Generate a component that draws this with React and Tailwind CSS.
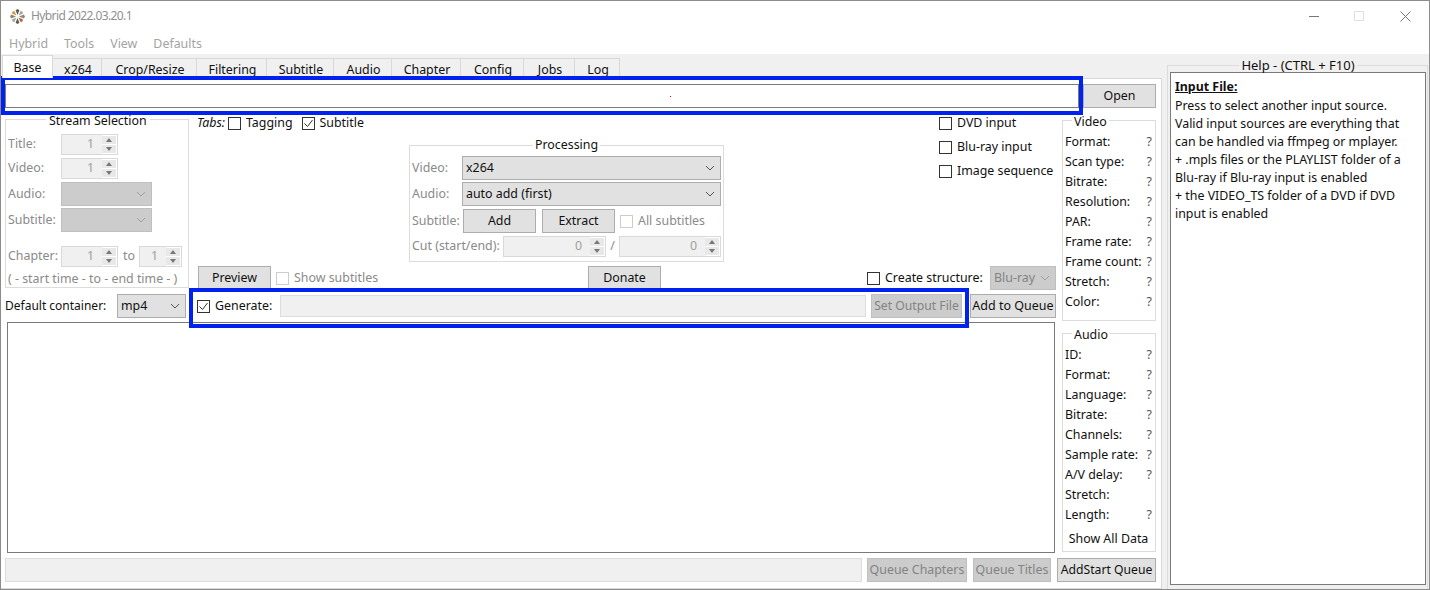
const tabs = [
  ['Base', 'w-[51px]'],
  ['x264', 'w-[49px]'],
  ['Crop/Resize', 'w-[95px]'],
  ['Filtering', 'w-[70px]'],
  ['Subtitle', 'w-[67px]'],
  ['Audio', 'w-[58px]'],
  ['Chapter', 'w-[69px]'],
  ['Config', 'w-[63px]'],
  ['Jobs', 'w-[51px]'],
  ['Log', 'w-[45px]'],
];

const videoInfo = [
  ['Format:', '?'],
  ['Scan type:', '?'],
  ['Bitrate:', '?'],
  ['Resolution:', '?'],
  ['PAR:', '?'],
  ['Frame rate:', '?'],
  ['Frame count:', '?'],
  ['Stretch:', '?'],
  ['Color:', '?'],
];

const audioInfo = [
  ['ID:', '?'],
  ['Format:', '?'],
  ['Language:', '?'],
  ['Bitrate:', '?'],
  ['Channels:', '?'],
  ['Sample rate:', '?'],
  ['A/V delay:', '?'],
  ['Stretch:', ''],
  ['Length:', '?'],
];

const helpLines = [
  'Press to select another input source.',
  'Valid input sources are everything that',
  'can be handled via ffmpeg or mplayer.',
  '+ .mpls files or the PLAYLIST folder of a',
  'Blu-ray if Blu-ray input is enabled',
  '+ the VIDEO_TS folder of a DVD if DVD',
  'input is enabled',
];

const Chevron = ({ color = '#555555' }) => (
  <svg className="shrink-0" width="10" height="6" viewBox="0 0 10 6" fill="none" stroke={color} strokeWidth="1">
    <path d="M1 1l4 4 4-4" />
  </svg>
);

const Check = ({ checked, disabled }) => (
  <span className={`flex items-center justify-center w-[13px] h-[13px] border shrink-0 bg-white ${disabled ? 'border-[#cccccc]' : 'border-[#333333]'}`}>
    {checked && (
      <svg width="11" height="11" viewBox="0 0 11 11" fill="none" stroke="#333333" strokeWidth="1">
        <path d="M1.5 5.5l3 3 5-6.5" />
      </svg>
    )}
  </span>
);

const Spinner = ({ value, className }) => (
  <div className={`flex items-center justify-end h-[21px] border border-[#d9d9d9] bg-[#f0f0f0] text-[#a0a0a0] pl-1 ${className}`}>
    <span className="leading-none pr-2">{value}</span>
    <div className="flex flex-col w-[15px] h-full bg-white py-[1px] pr-[1px] gap-[1px] shrink-0">
      <span className="flex-1 flex items-center justify-center bg-[#e8e8e8]">
        <span className="w-0 h-0 border-x-[3.5px] border-x-transparent border-b-[4px] border-b-[#777777]" />
      </span>
      <span className="flex-1 flex items-center justify-center bg-[#e8e8e8]">
        <span className="w-0 h-0 border-x-[3.5px] border-x-transparent border-t-[4px] border-t-[#777777]" />
      </span>
    </div>
  </div>
);

const Combo = ({ label, className, disabled }) => (
  <div className={`flex items-center justify-between h-[24px] border pl-[3px] pr-[5px] ${disabled ? 'bg-[#cccccc] border-[#bfbfbf] text-[#838383]' : 'bg-[#e1e1e1] border-[#adadad]'} ${className}`}>
    <span>{label}</span>
    <Chevron color={disabled ? '#a0a0a0' : '#555555'} />
  </div>
);

const Button = ({ children, className, disabled }) => (
  <button className={`flex items-center justify-center h-[24px] border whitespace-nowrap ${disabled ? 'bg-[#cccccc] border-[#bfbfbf] text-[#838383]' : 'bg-[#e1e1e1] border-[#adadad]'} ${className}`}>
    {children}
  </button>
);

const InfoGroup = ({ title, rows, className, children }) => (
  <fieldset className={`border border-[#dcdcdc] w-[94px] pl-[2px] pr-[3px] pt-[5px] ${className}`}>
    <legend className="ml-[7px] px-[2px] leading-[14px] relative top-[2px]">{title}</legend>
    {rows.map(([label, value]) => (
      <div key={label + title} className="flex justify-between h-[20px] leading-[20px]">
        <span>{label}</span>
        <span className="text-[#555555]">{value}</span>
      </div>
    ))}
    {children}
  </fieldset>
);

const Logo = () => (
  <svg width="15" height="15" viewBox="0 0 15 15">
    <path d="M7.5 6L5.6 1.2 7.5 0l1.9 1.2z" fill="#5f5a54" />
    <path d="M7.5 9L9.4 13.8 7.5 15l-1.9-1.2z" fill="#5f5a54" />
    <path d="M6 7.5L1.2 5.6 0 7.5l1.2 1.9z" fill="#8d8880" />
    <path d="M9 7.5l4.8 1.9L15 7.5l-1.2-1.9z" fill="#8d8880" />
    <path d="M6.4 6.4L2 4.4 2.6 2.6 4.4 2z" fill="#d9952f" />
    <path d="M8.6 6.4L13 4.4 12.4 2.6 10.6 2z" fill="#a9a39a" />
    <path d="M6.4 8.6L2 10.6l.6 1.8 1.8.6z" fill="#a9a39a" />
    <path d="M8.6 8.6l4.4 2-.6 1.8-1.8.6z" fill="#b5622c" />
  </svg>
);

const App = () => {
  return (
    <div className="relative w-[1430px] h-[590px] overflow-hidden flex flex-col bg-white text-[12.4px] text-[#111111] border border-[#8c8c8c] font-['Noto_Sans',sans-serif]">
      {/* title bar */}
      <div className="flex items-center h-[30px] pl-[9px] shrink-0">
        <Logo />
        <span className="ml-[6px] text-[12px] tracking-[-0.6px] text-[#8f8f8f]">Hybrid 2022.03.20.1</span>
        <div className="ml-auto flex items-center">
          <span className="w-[10px] h-[1px] bg-[#777777]" />
          <span className="ml-[35px] w-[10px] h-[10px] border border-[#e0e0e0]" />
          <svg className="ml-[36px] mr-[18px]" width="11" height="11" viewBox="0 0 11 11" stroke="#777777">
            <path d="M0.5 0.5l10 10M10.5 0.5l-10 10" />
          </svg>
        </div>
      </div>

      {/* menu bar */}
      <div className="flex items-center gap-[16px] h-[23px] pl-[8px] pt-[3px] shrink-0 text-[#a3a3a3]">
        <span>Hybrid</span>
        <span>Tools</span>
        <span>View</span>
        <span>Defaults</span>
      </div>

      <div className="flex flex-1 min-h-0 bg-[#f0f0f0]">
        {/* main tab area */}
        <div className="flex flex-col w-[1161px] shrink-0">
          <div className="flex pl-[1px] pt-[1px] h-[24px] shrink-0">
            {tabs.map(([name, width], i) => (
              <div
                key={name}
                className={`flex items-center justify-center pt-[3px] border-t border-r border-[#d9d9d9] ${width} ${i === 0 ? 'bg-white border-l relative z-10' : 'mt-[3px] pl-[2px] bg-[#f0f0f0]'}`}
              >
                {name}
              </div>
            ))}
          </div>

          <div className="flex flex-col flex-1 min-h-0 bg-white border border-[#d9d9d9] border-l-0 pl-[4px] pr-[3px] pt-[5px]">
            {/* input row */}
            <div className="flex gap-[4px] h-[24px] shrink-0">
              <div className="flex items-center w-[1074px] border border-[#7a7a7a] bg-white">
                <span className="ml-[664px] w-[1px] h-[1px] bg-[#ff0000]" />
              </div>
              <Button className="w-[73px] pt-[1px]">Open</Button>
            </div>

            <div className="flex flex-1 min-h-0 gap-[5px] mt-[5px]">
              {/* left column */}
              <div className="flex flex-col w-[1052px] shrink-0">
                <div className="flex h-[181px] shrink-0">
                  <fieldset className="border border-[#dcdcdc] w-[184px] h-[176px] -mt-[1px] pl-[2px] shrink-0 text-[#8a8a8a]">
                    <legend className="ml-[38px] px-[3px] leading-[14px] text-[#111111] relative top-[2px]">Stream Selection</legend>
                    <div className="flex items-center mt-[7px] h-[22px]">
                      <span className="w-[53px]">Title:</span>
                      <Spinner value="1" className="w-[57px]" />
                    </div>
                    <div className="flex items-center mt-[2px] h-[22px]">
                      <span className="w-[53px]">Video:</span>
                      <Spinner value="1" className="w-[57px]" />
                    </div>
                    <div className="flex items-center mt-[3px] h-[24px]">
                      <span className="w-[53px]">Audio:</span>
                      <Combo className="w-[91px]" disabled />
                    </div>
                    <div className="flex items-center mt-[2px] h-[24px]">
                      <span className="w-[53px]">Subtitle:</span>
                      <Combo className="w-[91px]" disabled />
                    </div>
                    <div className="flex items-center mt-[13px] h-[22px]">
                      <span className="w-[53px]">Chapter:</span>
                      <Spinner value="1" className="w-[57px]" />
                      <span className="ml-[5px] w-[16px]">to</span>
                      <Spinner value="1" className="w-[43px]" />
                    </div>
                    <div className="mt-[2px] h-[20px] leading-[20px] whitespace-nowrap">( - start time - to - end time - )</div>
                  </fieldset>

                  <div className="flex flex-col flex-1 ml-[8px]">
                    <div className="flex flex-1">
                      <div className="flex items-center h-[18px] mt-[1px] w-[212px] shrink-0">
                        <span className="italic mr-[3px]">Tabs:</span>
                        <Check />
                        <span className="ml-[5px]">Tagging</span>
                        <span className="ml-[9px]"><Check checked /></span>
                        <span className="ml-[5px]">Subtitle</span>
                      </div>

                      <fieldset className="border border-[#dcdcdc] w-[315px] h-[124px] mt-[25px] px-[2px] shrink-0 text-[#8a8a8a]">
                        <legend className="mx-auto px-[2px] leading-[14px] text-[#111111]">Processing</legend>
                        <div className="flex items-center mt-[4px]">
                          <span className="w-[50px]">Video:</span>
                          <Combo label="x264" className="w-[259px] text-[#111111]" />
                        </div>
                        <div className="flex items-center mt-[2px]">
                          <span className="w-[50px]">Audio:</span>
                          <Combo label="auto add (first)" className="w-[259px] text-[#111111]" />
                        </div>
                        <div className="flex items-center mt-[3px]">
                          <span className="w-[51px]">Subtitle:</span>
                          <Button className="w-[73px] text-[#111111]">Add</Button>
                          <Button className="w-[73px] ml-[6px] text-[#111111]">Extract</Button>
                          <span className="ml-[5px]"><Check disabled /></span>
                          <span className="ml-[5px] whitespace-nowrap">All subtitles</span>
                        </div>
                        <div className="flex items-center mt-[3px] whitespace-nowrap">
                          <span className="w-[91px]">Cut (start/end):</span>
                          <Spinner value="0" className="w-[103px]" />
                          <span className="w-[13px] text-center">/</span>
                          <Spinner value="0" className="w-[102px]" />
                        </div>
                      </fieldset>

                      <div className="flex flex-col gap-[6px] ml-[215px] pt-[1px] w-[118px] shrink-0">
                        {['DVD input', 'Blu-ray input', 'Image sequence'].map((label) => (
                          <div key={label} className="flex items-center h-[18px] whitespace-nowrap">
                            <Check />
                            <span className="ml-[5px]">{label}</span>
                          </div>
                        ))}
                      </div>
                    </div>

                    <div className="flex items-center h-[24px] pl-[1px] mb-[4px]">
                      <Button className="w-[73px]">Preview</Button>
                      <span className="ml-[5px]"><Check disabled /></span>
                      <span className="ml-[5px] text-[#8a8a8a] whitespace-nowrap w-[294px]">Show subtitles</span>
                      <Button className="w-[73px]">Donate</Button>
                      <span className="ml-[206px]"><Check /></span>
                      <span className="ml-[5px] w-[105px] whitespace-nowrap">Create structure:</span>
                      <Combo label="Blu-ray" className="w-[66px]" disabled />
                    </div>
                  </div>
                </div>

                {/* output row */}
                <div className="flex items-center h-[24px] shrink-0">
                  <span className="w-[112px] whitespace-nowrap text-[12px]">Default container:</span>
                  <Combo label="mp4" className="w-[69px]" />
                  <span className="ml-[11px]"><Check checked /></span>
                  <span className="ml-[5px] w-[65px]">Generate:</span>
                  <div className="w-[586px] h-[22px] bg-[#f0f0f0] border border-[#dcdcdc]" />
                  <Button className="w-[91px] ml-[5px] text-[12.2px]" disabled>Set Output File</Button>
                  <Button className="w-[86px] ml-[8px] text-[12.5px]">Add to Queue</Button>
                </div>

                <div className="h-[231px] mt-[4px] ml-[2px] w-[1048px] border border-[#7a7a7a] bg-white shrink-0" />

                <div className="flex items-center h-[24px] mt-[5px] shrink-0">
                  <div className="w-[857px] h-[24px] bg-[#f0f0f0] border border-[#dcdcdc]" />
                  <Button className="w-[100px] ml-[5px] pt-[1px]" disabled>Queue Chapters</Button>
                  <Button className="w-[78px] ml-[6px] pt-[1px]" disabled>Queue Titles</Button>
                </div>
              </div>

              {/* right column */}
              <div className="flex flex-col w-[94px] shrink-0">
                <InfoGroup title="Video" rows={videoInfo} className="h-[208px]" />
                <InfoGroup title="Audio" rows={audioInfo} className="h-[226px] mt-[5px]">
                  <div className="text-center mt-[4px] leading-[20px] whitespace-nowrap">Show All Data</div>
                </InfoGroup>
                <Button className="w-[99px] -ml-[5px] mt-[6px] pt-[1px] text-[12.2px]">AddStart Queue</Button>
              </div>
            </div>
          </div>
        </div>

        {/* help panel */}
        <fieldset className="border border-[#dcdcdc] border-b-0 flex-1 mt-[4px] ml-[5px] mr-[1px] pl-[2px] pr-[1px] min-w-0">
          <legend className="mx-auto px-[2px] leading-[14px] text-[13px]">Help - (CTRL + F10)</legend>
          <div className="h-[513px] bg-white border border-[#7a7a7a] pl-[4px] pt-[5px] leading-[18px]">
            <div className="font-bold underline mb-[1px]">Input File:</div>
            {helpLines.map((line) => (
              <div key={line} className="whitespace-nowrap">{line}</div>
            ))}
          </div>
        </fieldset>
      </div>

      {/* blue highlight boxes */}
      <div className="absolute left-0 top-[75px] w-[1082px] h-[39px] border-[4px] border-[#0022ee] pointer-events-none" />
      <div className="absolute left-[188px] top-[287px] w-[780px] h-[40px] border-[4px] border-[#0022ee] pointer-events-none" />
    </div>
  );
};

export default App;
